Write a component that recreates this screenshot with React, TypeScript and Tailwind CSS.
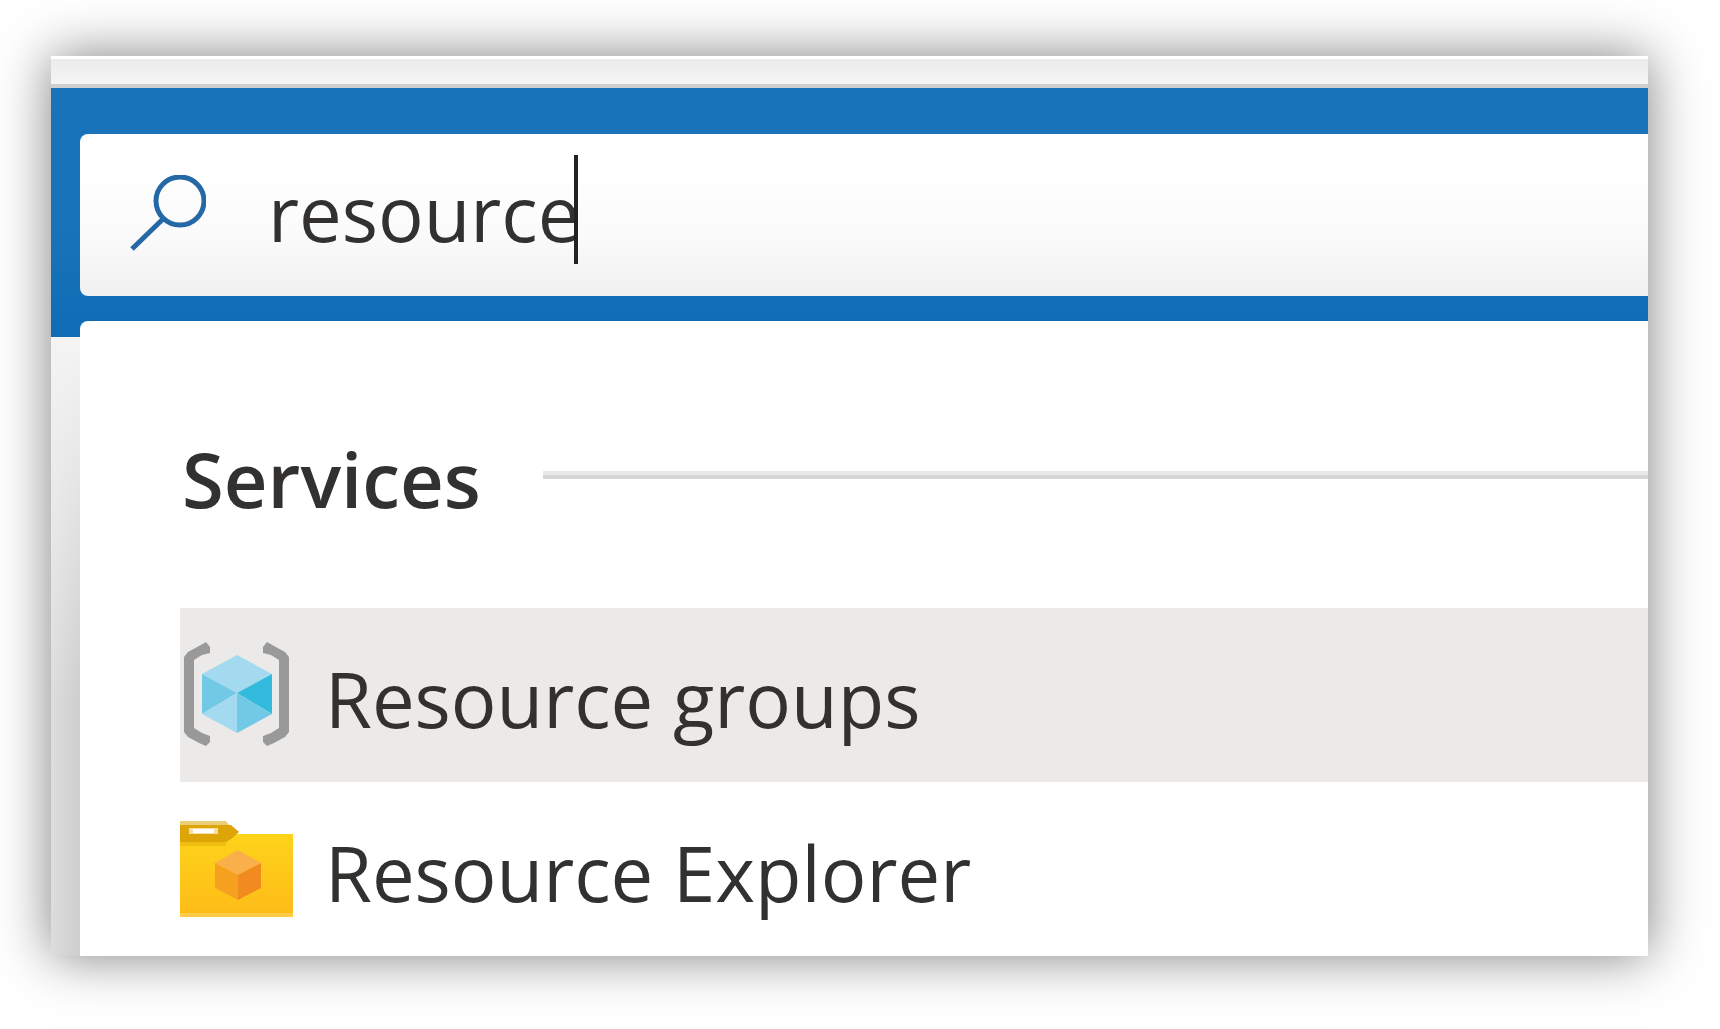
import { useState } from 'react'

interface Service {
  name: string
  icon: React.ReactNode
}

const BRACKET = 'M26 3 L30 8 V14 L22 16 L14 21 V89 L22 94 L30 97 V103 L26 107 L19 104 L8 98 L4 93 V18 L8 13 L19 7 Z'

function SearchIcon() {
  return (
    <svg className="w-[76px] h-[76px] shrink-0" viewBox="0 0 76 76" fill="none" stroke="#2468a6" strokeWidth={5} aria-hidden="true">
      <circle cx="50" cy="26" r="24" />
      <path d="M34 43 L2 74" />
    </svg>
  )
}

function ResourceGroupsIcon() {
  return (
    <svg className="w-[113px] h-[113px] shrink-0" viewBox="0 0 113 113" aria-hidden="true">
      <path fill="#999999" d={BRACKET} />
      <path fill="#999999" d={BRACKET} transform="matrix(-1 0 0 1 113 0)" />
      <path fill="#a4daf0" d="M57 16 L92 35 L57 54 L22 35 Z" />
      <path fill="#71c9e6" d="M22 35 L57 54 L22 75 Z" />
      <path fill="#32bbdc" d="M92 35 L57 54 L92 75 Z" />
      <path fill="#a4daf0" d="M22 75 L57 54 V94 Z" />
      <path fill="#71c9e6" d="M92 75 L57 54 V94 Z" />
    </svg>
  )
}

function ResourceExplorerIcon() {
  return (
    <svg className="w-[113px] h-[113px] shrink-0" viewBox="0 0 113 113" aria-hidden="true">
      <defs>
        <linearGradient id="folder" x1="0" y1="0" x2="0" y2="1">
          <stop offset="0" stopColor="#fed31a" />
          <stop offset="1" stopColor="#fdbb18" />
        </linearGradient>
      </defs>
      <path fill="url(#folder)" d="M0 21 H113 V104 H0 Z" />
      <path fill="#fdcb45" d="M0 100 H113 V104 H0 Z" />
      <path fill="#f0bd10" d="M0 29 H46 V33 H0 Z" />
      <path fill="#dda508" d="M0 12 H51 L59 19 L51 26 L46 29 H0 Z" />
      <path fill="#ebcf78" d="M0 8 H46 L49 12 H0 Z" />
      <path fill="#f3dfa5" d="M9 15 H38 V21 H9 Z" />
      <path fill="#ffffff" d="M13 16 H34 V20 H13 Z" />
      <path fill="#fab04a" d="M58 37 L81 50 L58 62 L35 50 Z" />
      <path fill="#f6a01f" d="M35 50 L58 62 V87 L35 75 Z" />
      <path fill="#f28b1f" d="M81 50 L58 62 V87 L81 75 Z" />
    </svg>
  )
}

const services: Service[] = [
  { name: 'Resource groups', icon: <ResourceGroupsIcon /> },
  { name: 'Resource Explorer', icon: <ResourceExplorerIcon /> },
]

export default function App() {
  const [query, setQuery] = useState('resource')
  const [active, setActive] = useState(0)

  return (
    <div className="min-h-screen bg-white pt-14 pb-[72px] pl-[51px] pr-[72px] font-['Open_Sans','Noto_Sans',sans-serif] text-[#323130]">
      <div className="shadow-[0_0_50px_rgba(0,0,0,0.5)]">
        <div className="h-8 border-t-3 border-t-white border-b-4 border-b-[#cfcfcf] bg-linear-to-b from-[#ecebea] to-[#f5f5f5]" />

        <header className="bg-linear-to-b from-[#1973ba] from-60% to-[#106db5] pt-[46px] pb-[25px] pl-[29px]">
          <label className="flex h-[162px] items-center gap-[62px] overflow-hidden rounded-l-lg bg-linear-to-b from-white from-20% via-[#fafafa] via-65% to-[#f0f0f0] pb-1 pl-[50px]">
            <SearchIcon />
            <span className="flex items-center">
              <input
                type="text"
                aria-label="Search"
                value={query}
                onChange={e => setQuery(e.target.value)}
                className="[field-sizing:content] bg-transparent text-[76px] leading-[108px] caret-transparent outline-none"
              />
              <span className="-ml-[6px] mb-2 h-[109px] w-1 bg-[#222222]" />
            </span>
          </label>
        </header>

        <div className="flex bg-[#106db5]">
          <div className="flex w-[29px] shrink-0 flex-col pt-4">
            <div className="flex-1 bg-[linear-gradient(to_bottom,#f4f4f4,transparent_60%),linear-gradient(to_right,#dddddd,#cdcdcd)]" />
          </div>

          <main className="min-w-0 flex-1 rounded-tl-lg bg-white pt-24 pl-[100px]">
            <div className="flex items-center gap-[62px] pb-[75px]">
              <h2 className="pt-2 pl-0.5 text-[76px] leading-[108px] font-semibold">Services</h2>
              <div className="h-2 flex-1 border-t-4 border-b-4 border-t-[#e9e9e9] border-b-[#d6d6d6]" />
            </div>
            <ul>
              {services.map((s, i) => (
                <li key={s.name}>
                  <a
                    href="#"
                    onMouseEnter={() => setActive(i)}
                    className={`flex h-[174px] items-center gap-8 text-[76px] leading-[108px] whitespace-nowrap ${active === i ? 'bg-[#ebeae8]' : 'bg-white'}`}
                  >
                    {s.icon}
                    <span className="pt-2">{s.name}</span>
                  </a>
                </li>
              ))}
            </ul>
          </main>
        </div>
      </div>
    </div>
  )
}
